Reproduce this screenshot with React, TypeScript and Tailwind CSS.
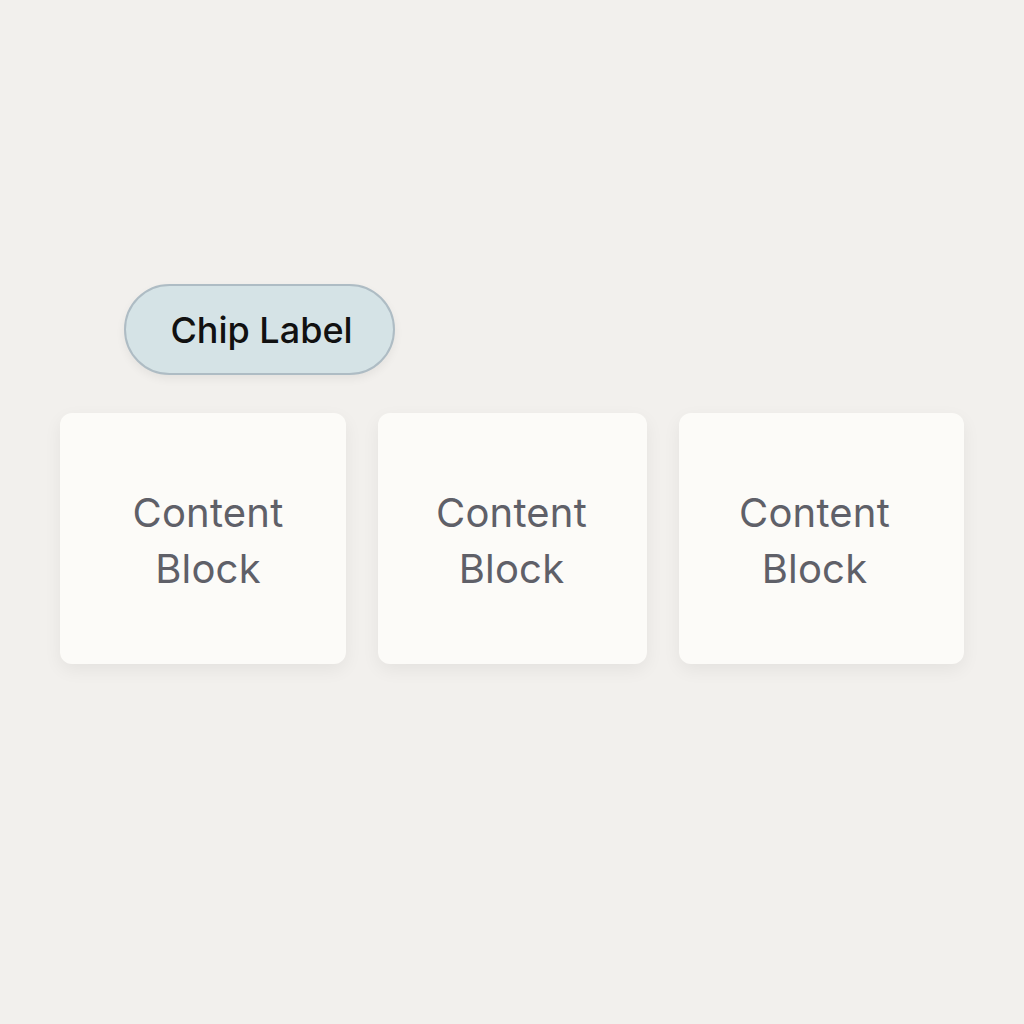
import React from "react";

function Card({ w, shift }: { w: string; shift: string }) {
  return (
    <div
      className={`${w} h-[251px] rounded-[12px] bg-[#fcfbf8] shadow-[0_6px_18px_rgba(0,0,0,0.06)] flex items-center justify-center`}
    >
      <div className={`text-center text-[40px] leading-[56px] text-[#5f6068] tracking-[0.005em] pt-[4px] ${shift}`}>
        Content
        <br />
        Block
      </div>
    </div>
  );
}

export default function App() {
  return (
    <div
      className="w-[1024px] h-[1024px] bg-[#f2f0ed] overflow-hidden"
      style={{ fontFamily: "Inter, 'Noto Sans', sans-serif" }}
    >
      <div className="pt-[284px] pl-[124px]">
        <div className="w-[271px] h-[91px] rounded-full bg-[#d5e3e6] border-2 border-[#aebcc4] shadow-[0_4px_10px_rgba(0,0,0,0.06)] flex items-center justify-center text-[36px] text-[#111111] font-medium pl-[4px]">
          Chip Label
        </div>
      </div>
      <div className="mt-[38px] pl-[60px] flex gap-[32px]">
        <Card w="w-[286px]" shift="ml-[10px]" />
        <Card w="w-[269px]" shift="mr-[2px]" />
        <Card w="w-[285px]" shift="mr-[14px]" />
      </div>
    </div>
  );
}
